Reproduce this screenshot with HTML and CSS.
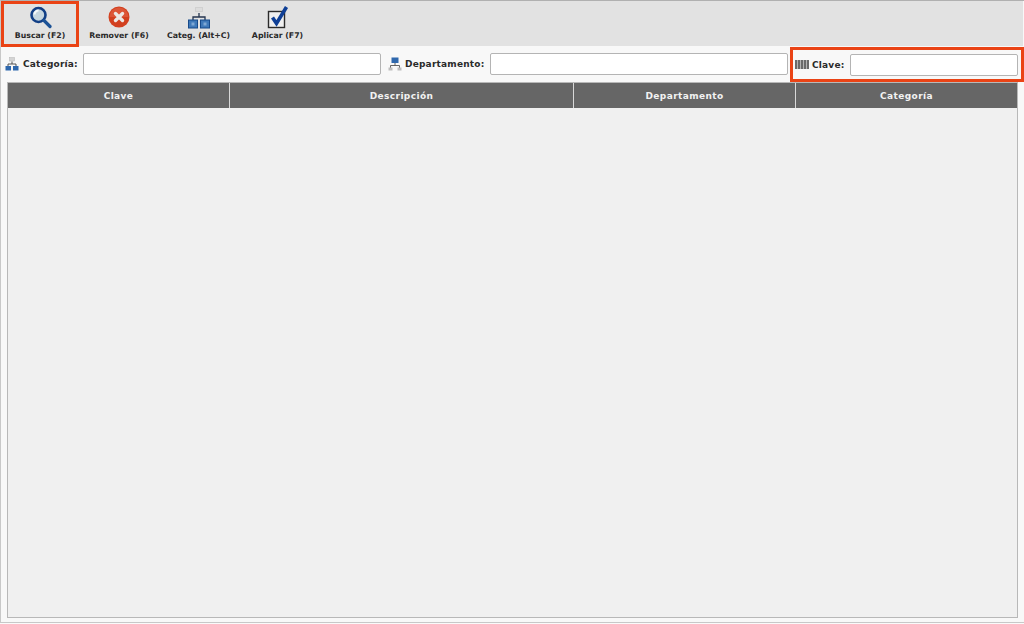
FILE: index.html
```html
<!DOCTYPE html>
<html lang="es">
<head>
<meta charset="utf-8">
<title>Buscar</title>
<link rel="stylesheet" href="styles.css">
</head>
<body>
<div class="window">
  <div class="toolbar">
    <div class="tool tool-search">
      <svg class="tool-icon" viewBox="0 0 24 24" width="24" height="24"><circle cx="10.500" cy="10" r="7" fill="#c6d6df" stroke="#123f86" stroke-width="2.600"/><path d="M6.500 9.500a4 4 0 0 1 4-4" fill="none" stroke="#f4f8fa" stroke-width="2"/><path d="M16 15.500l6 6" stroke="#1c5296" stroke-width="3.200" stroke-linecap="round"/></svg>
      <span>Buscar (F2)</span>
    </div>
    <div class="tool tool-remove">
      <svg class="tool-icon" viewBox="0 0 24 24" width="24" height="24"><circle cx="12" cy="12" r="10.500" fill="#d2401f"/><path d="M2.500 12a9.500 9.500 0 0 1 19 0z" fill="#dc5637"/><path d="M8.500 8.500l7 7M15.500 8.500l-7 7" stroke="#ece8e4" stroke-width="3.400" stroke-linecap="round"/></svg>
      <span>Remover (F6)</span>
    </div>
    <div class="tool tool-categ">
      <svg class="tool-icon" viewBox="0 0 24 24" width="24" height="24"><rect x="8.500" y="2.500" width="7" height="4" fill="#dcdcdc" stroke="#d0d0d0"/><path d="M12 8v4M6 15v-3h12v3" fill="none" stroke="#24344f" stroke-width="1.300"/><rect x="1.500" y="15" width="9" height="8" fill="#3f79b9" stroke="#174a8a"/><rect x="13.500" y="15" width="9" height="8" fill="#3f79b9" stroke="#174a8a"/><rect x="4.500" y="17.500" width="3" height="3" fill="#7fa8d4"/><rect x="16.500" y="17.500" width="3" height="3" fill="#7fa8d4"/></svg>
      <span>Categ. (Alt+C)</span>
    </div>
    <div class="tool tool-apply">
      <svg class="tool-icon" viewBox="0 0 24 24" width="24" height="24"><rect x="2.500" y="6.500" width="16" height="16" fill="#f0f0f0" stroke="#2b2b2b" stroke-width="1.400"/><path d="M6.500 12.500l4 6L20.500 2" fill="none" stroke="#0f3f96" stroke-width="3.600"/></svg>
      <span>Aplicar (F7)</span>
    </div>
  </div>
  <div class="filters">
    <div class="filter filter-cat">
      <svg class="small-icon" viewBox="0 0 14 14" width="14" height="14"><rect x="4.500" y=".5" width="5" height="3.500" fill="#d4d4d4" stroke="#bcbcbc" stroke-width=".6"/><path d="M7 4.500v2.500M3 9V7h8v2" fill="none" stroke="#444" stroke-width=".9"/><rect x=".5" y="9" width="5.500" height="4.500" fill="#2f68ad"/><rect x="8" y="9" width="5.500" height="4.500" fill="#2f68ad"/></svg>
      <label>Categoría:</label>
      <div class="input"></div>
    </div>
    <div class="filter filter-dep">
      <svg class="small-icon" viewBox="0 0 14 14" width="14" height="14"><rect x="3.500" y=".5" width="7" height="5.500" fill="#2f68ad"/><path d="M7 6v2.500M2.500 11V8.500h9V11" fill="none" stroke="#555" stroke-width=".9"/><rect x=".5" y="10.500" width="4" height="3" fill="#bdbdbd"/><rect x="9.500" y="10.500" width="4" height="3" fill="#bdbdbd"/></svg>
      <label>Departamento:</label>
      <div class="input"></div>
    </div>
    <div class="filter filter-key">
      <svg class="barcode" viewBox="0 0 14 9" width="14" height="9"><rect width="14" height="9" fill="#6a6a6a"/><path d="M2.500 0v9M5.500 0v9M8.500 0v9M11.500 0v9" stroke="#c8c8c8" stroke-width=".8"/></svg>
      <label>Clave:</label>
      <div class="input"></div>
    </div>
  </div>
  <div class="grid">
    <div class="grid-head">
      <div class="col col-clave">Clave</div>
      <div class="col col-desc">Descripción</div>
      <div class="col col-dep">Departamento</div>
      <div class="col col-cat">Categoría</div>
    </div>
  </div>
</div>
</body>
</html>
```
FILE: styles.css
```css
* { box-sizing: border-box; }
html, body { margin: 0; padding: 0; }
body {
  width: 1024px;
  height: 624px;
  overflow: hidden;
  background: #fafafa;
  font-family: "DejaVu Sans", sans-serif;
}
.window {
  width: 1024px;
  height: 623px;
  display: flex;
  flex-direction: column;
  background: #f8f8f8;
  border-top: 1px solid #b0b0b0;
  border-left: 1px solid #c8c8c8;
  border-bottom: 1px solid #c8c8c8;
}
.toolbar {
  height: 45px;
  display: flex;
  background: #e2e2e2;
  flex: none;
  margin-right: 1px;
}
.tool {
  display: flex;
  flex-direction: column;
  align-items: center;
  height: 45px;
  padding-top: 4px;
  font-size: 7.800px;
  font-weight: 700;
  color: #2a2a2a;
  white-space: nowrap;
}
.tool span { margin-top: 1px; line-height: 12px; }
.tool-icon { display: block; flex: none; }
.tool-search {
  width: 78px;
  height: 46px;
  border: 3px solid #ea4315;
  padding-top: 1px;
}
.tool-remove { width: 80px; }
.tool-categ { width: 79px; }
.tool-apply { width: 79px; }
.filters {
  height: 36px;
  display: flex;
  flex: none;
}
.filter {
  display: flex;
  align-items: center;
  font-size: 9px;
  font-weight: 700;
  color: #2a2a2a;
  letter-spacing: .2px;
  white-space: nowrap;
}
.filter label { margin-left: 4px; }
.small-icon, .barcode { flex: none; }
.input {
  height: 22px;
  background: #fff;
  border: 1px solid #b4b4b4;
  border-radius: 2px;
  margin-left: auto;
}
.filter-cat { width: 380px; padding-left: 4px; }
.filter-cat .input { width: 298px; }
.filter-dep { width: 407px; padding-left: 7px; }
.filter-dep .input { width: 298px; }
.filter-dep label { margin-left: 3px; }
.filter-key {
  width: 234px;
  margin-left: 2px;
  margin-top: 1px;
  height: 35px;
  border: 3px solid #ea4315;
  padding-left: 2px;
  padding-right: 3px;
}
.filter-key label { margin-left: 3px; }
.filter-key .input { width: 168px; }
.grid {
  margin: 0 6px 4px 6px;
  flex: 1;
  background: #f0f0f0;
  border: 1px solid #b8b8b8;
}
.grid-head {
  display: flex;
  height: 25px;
  background: #666;
  color: #f2f2f2;
  font-size: 9px;
  font-weight: 700;
  letter-spacing: .4px;
}
.col {
  display: flex;
  align-items: center;
  justify-content: center;
  border-right: 1px solid #d8d8d8;
}
.col-clave { width: 222px; }
.col-desc { width: 344px; }
.col-dep { width: 222px; }
.col-cat { flex: 1; border-right: 0; }
```
